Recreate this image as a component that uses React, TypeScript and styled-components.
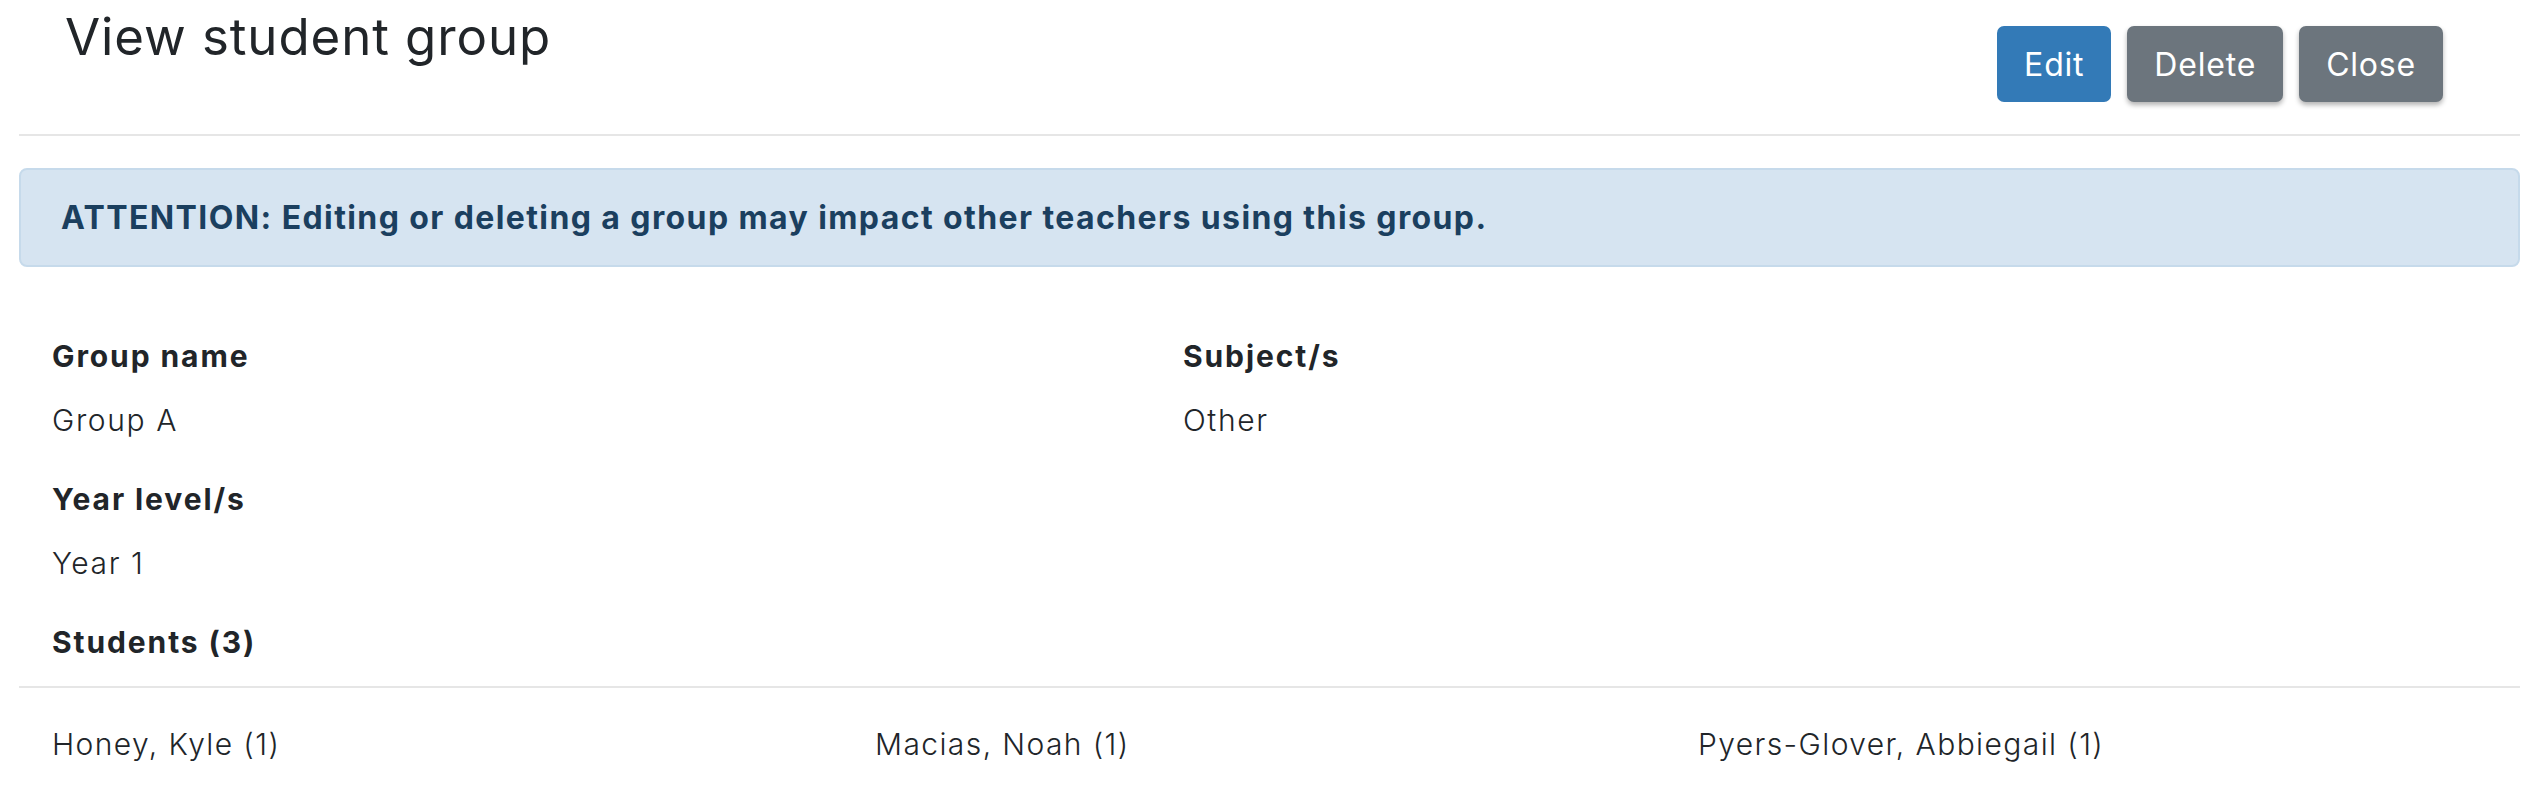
import styled, { createGlobalStyle } from "styled-components";

const GlobalStyle = createGlobalStyle`
  body {
    margin: 0;
    background: #fff;
    color: #212529;
    font-family: Inter, "Open Sans", "Liberation Sans", sans-serif;
  }
`;

const Page = styled.div`
  padding: 0 13px 0 19px;
`;

const Header = styled.div`
  display: flex;
  justify-content: space-between;
  align-items: flex-start;
  height: 134px;
  border-bottom: 2px solid #e6e6e6;
`;

const Title = styled.h2`
  margin: 6px 0 0 46px;
  font-size: 51px;
  font-weight: 400;
  line-height: 62px;
  letter-spacing: 0.9px;
`;

const Actions = styled.div`
  display: flex;
  gap: 16px;
  margin: 26px 77px 0 0;
`;

const Button = styled.button<{ $primary?: boolean }>`
  height: 76px;
  padding: 0 27px;
  border: none;
  border-radius: 7px;
  font-family: inherit;
  font-size: 32px;
  font-weight: 400;
  letter-spacing: 0.8px;
  color: #fff;
  background: ${(p) => (p.$primary ? "#337ab7" : "#6c757d")};
  box-shadow: ${(p) => (p.$primary ? "none" : "0 3px 5px rgba(0, 0, 0, 0.3)")};
  cursor: pointer;
`;

const Alert = styled.div`
  margin-top: 32px;
  height: 99px;
  box-sizing: border-box;
  display: flex;
  align-items: center;
  padding: 0 40px;
  background: #d6e4f1;
  border: 2px solid #c6daeb;
  border-radius: 8px;
  color: #1b3f5f;
  font-size: 32px;
  font-weight: 700;
  letter-spacing: 1.4px;
`;

const Details = styled.div`
  display: grid;
  grid-template-columns: 1131px 1fr;
  padding: 69px 0 0 33px;
`;

const Field = styled.div`
  display: flex;
  flex-direction: column;
`;

const Label = styled.div`
  font-size: 30px;
  font-weight: 700;
  line-height: 40px;
  letter-spacing: 1.9px;
  margin-bottom: 24px;
`;

const Value = styled.div`
  font-size: 30px;
  font-weight: 300;
  line-height: 40px;
  letter-spacing: 1.6px;
  margin-bottom: 39px;
`;

const StudentsLabel = styled(Label)`
  padding-left: 33px;
  margin: 0;
  padding-bottom: 24px;
`;

const StudentList = styled.div`
  display: grid;
  grid-template-columns: repeat(3, 823px);
  border-top: 2px solid #e6e6e6;
  padding: 36px 0 0 33px;
`;

const Student = styled.div`
  font-size: 30px;
  font-weight: 300;
  line-height: 40px;
  letter-spacing: 1.4px;
`;

const students = ["Honey, Kyle (1)", "Macias, Noah (1)", "Pyers-Glover, Abbiegail (1)"];

export default function App() {
  return (
    <Page>
      <GlobalStyle />
      <Header>
        <Title>View student group</Title>
        <Actions>
          <Button $primary>Edit</Button>
          <Button>Delete</Button>
          <Button>Close</Button>
        </Actions>
      </Header>
      <Alert>ATTENTION: Editing or deleting a group may impact other teachers using this group.</Alert>
      <Details>
        <Field>
          <Label>Group name</Label>
          <Value>Group A</Value>
        </Field>
        <Field>
          <Label>Subject/s</Label>
          <Value>Other</Value>
        </Field>
        <Field>
          <Label>Year level/s</Label>
          <Value>Year 1</Value>
        </Field>
      </Details>
      <StudentsLabel>Students (3)</StudentsLabel>
      <StudentList>
        {students.map((s) => (
          <Student key={s}>{s}</Student>
        ))}
      </StudentList>
    </Page>
  );
}
